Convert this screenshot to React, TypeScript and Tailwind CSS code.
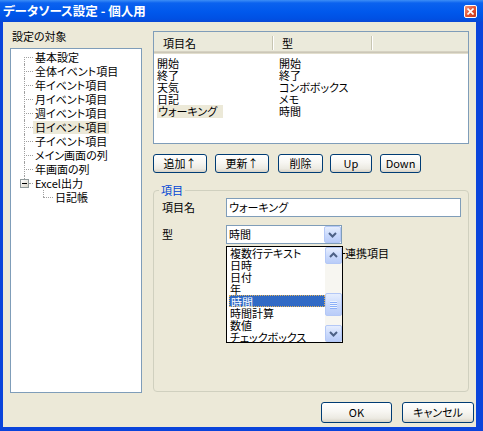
import React from "react";

const treeItems = [
  "基本設定",
  "全体イベント項目",
  "年イベント項目",
  "月イベント項目",
  "週イベント項目",
  "日イベント項目",
  "子イベント項目",
  "メイン画面の列",
  "年画面の列",
];

const fields = [
  { name: "開始", type: "開始" },
  { name: "終了", type: "終了" },
  { name: "天気", type: "コンボボックス" },
  { name: "日記", type: "メモ" },
  { name: "ウォーキング", type: "時間" },
];

const typeOptions = [
  "複数行テキスト",
  "日時",
  "日付",
  "年",
  "時間",
  "時間計算",
  "数値",
  "チェックボックス",
];

const xpButton =
  "flex items-center justify-center rounded-[3px] border border-[#003C74] bg-[linear-gradient(to_bottom,#FFFFFF_0%,#F7F6F2_45%,#ECEAE2_80%,#D8D2C6_100%)] text-[11px] leading-none text-black";

const scrollButton =
  "flex h-[17px] w-[17px] items-center justify-center rounded-[2px] border border-[#B4C8F6] bg-[linear-gradient(to_bottom,#E6EEFE_0%,#C9D9FC_55%,#B9CCF8_100%)]";

function Chevron({ up }: { up?: boolean }) {
  return (
    <svg width="9" height="6" viewBox="0 0 9 6" aria-hidden="true">
      <path
        d={up ? "M1 5 L4.5 1.5 L8 5" : "M1 1 L4.5 4.5 L8 1"}
        fill="none"
        stroke="#4D6185"
        strokeWidth="2"
      />
    </svg>
  );
}

function TreePanel() {
  return (
    <div className="mt-[6px] h-[345px] w-[132px] border border-[#7F9DB9] bg-white pt-[1px]">
      {treeItems.map((item, i) => (
        <div key={item} className="flex h-[14px] items-center">
          <div className="relative ml-[13px] h-full w-[9px]">
            <span
              className={`absolute left-0 bottom-0 border-l border-dotted border-[#A0A0A0] ${
                i === 0 ? "top-[7px]" : "top-0"
              }`}
            />
            <span className="absolute left-0 top-[7px] w-[9px] border-t border-dotted border-[#A0A0A0]" />
          </div>
          <span
            className={`h-[13px] px-[2px] text-[11px] leading-[13px] ${
              i === 5 ? "bg-[#ECE9D8]" : ""
            }`}
          >
            {item}
          </span>
        </div>
      ))}
      <div className="flex h-[14px] items-center">
        <div className="relative ml-[9px] h-full w-[13px]">
          <span className="absolute left-[4px] top-0 h-[3px] border-l border-dotted border-[#A0A0A0]" />
          <span className="absolute left-[9px] top-[7px] w-[4px] border-t border-dotted border-[#A0A0A0]" />
          <span className="absolute left-0 top-[3px] flex h-[9px] w-[9px] items-center justify-center border border-[#919B9C] bg-[linear-gradient(to_bottom_right,#FFFFFF,#D8D4C8)]">
            <span className="h-px w-[5px] bg-black" />
          </span>
        </div>
        <span className="h-[13px] px-[2px] text-[11px] leading-[13px]">Excel出力</span>
      </div>
      <div className="flex h-[14px] items-center">
        <div className="relative ml-[32px] h-full w-[10px]">
          <span className="absolute left-0 top-0 h-[7px] border-l border-dotted border-[#A0A0A0]" />
          <span className="absolute left-0 top-[7px] w-[10px] border-t border-dotted border-[#A0A0A0]" />
        </div>
        <span className="h-[13px] px-[2px] text-[11px] leading-[13px]">日記帳</span>
      </div>
    </div>
  );
}

function ListView() {
  return (
    <div className="h-[113px] border border-[#7F9DB9] bg-white">
      <div className="flex h-[22px] items-center bg-[#EBEADB] shadow-[inset_0_-1px_0_#E2DECD,inset_0_-2px_0_#CBC7B8,inset_0_-3px_0_#D6D2C2]">
        <span className="w-[118px] pl-[9px] text-[11px] leading-none">項目名</span>
        <span className="h-[14px] w-[2px] border-l border-[#C7C5B2] bg-white" />
        <span className="w-[97px] pl-[8px] text-[11px] leading-none">型</span>
        <span className="h-[14px] w-[2px] border-l border-[#C7C5B2] bg-white" />
      </div>
      <div className="pt-[3px]">
        {fields.map((f, i) => (
          <div key={f.name} className="flex h-[12px] items-center text-[11px] leading-[12px]">
            <div className="w-[125px] pl-[3px]">
              <span className={i === 4 ? "inline-block h-[13px] bg-[#ECE9D8] pl-px pr-[6px] leading-[13px]" : ""}>
                {f.name}
              </span>
            </div>
            <span>{f.type}</span>
          </div>
        ))}
      </div>
    </div>
  );
}

function TypeDropdown() {
  return (
    <div className="absolute left-[-1px] top-[20px] z-10 flex h-[97px] w-[117px] border border-black bg-white">
      <div className="w-[99px] pl-[2px]">
        {typeOptions.map((opt, i) => (
          <div
            key={opt}
            className={`h-[12px] pl-px text-[11px] leading-[12px] ${
              i === 4 ? "border border-dotted border-[#E3B35A] bg-[#316AC5] pl-0 leading-[10px] text-white" : ""
            }`}
          >
            {opt}
          </div>
        ))}
      </div>
      <div className="flex w-[17px] flex-col bg-[#F7F6F1]">
        <div className={scrollButton}>
          <Chevron up />
        </div>
        <div className="h-[29px]" />
        <div className={`${scrollButton} h-[24px] flex-col gap-px`}>
          <span className="h-px w-[7px] bg-[#EEF4FE] shadow-[0_1px_0_#8CB0F8]" />
          <span className="h-px w-[7px] bg-[#EEF4FE] shadow-[0_1px_0_#8CB0F8]" />
          <span className="h-px w-[7px] bg-[#EEF4FE] shadow-[0_1px_0_#8CB0F8]" />
          <span className="h-px w-[7px] bg-[#EEF4FE] shadow-[0_1px_0_#8CB0F8]" />
        </div>
        <div className="h-[9px]" />
        <div className={scrollButton}>
          <Chevron />
        </div>
      </div>
    </div>
  );
}

function ItemGroup() {
  return (
    <div className="relative mt-[17px] h-[202px] rounded-[4px] border border-[#D0D0BF]">
      <span className="absolute left-[5px] top-[-7px] bg-[#ECE9D8] px-[2px] text-[11px] leading-[13px] text-[#0046D5]">
        項目
      </span>
      <div className="flex items-center pl-[8px] pt-[7px]">
        <span className="w-[64px] text-[11px] leading-none">項目名</span>
        <div className="flex h-[19px] w-[235px] items-center border border-[#7F9DB9] bg-white pl-[2px] text-[11px] leading-none">
          ウォーキング
        </div>
      </div>
      <div className="flex items-center pl-[8px] pt-[8px]">
        <span className="w-[64px] text-[11px] leading-none">型</span>
        <div className="relative flex h-[19px] w-[116px] items-center justify-between border border-[#7F9DB9] bg-white pl-[2px] text-[11px] leading-none">
          <span>時間</span>
          <div className={scrollButton}>
            <Chevron />
          </div>
          <TypeDropdown />
        </div>
      </div>
      <div className="flex items-center pl-[188px] pt-[3px]">
        <span className="h-px w-[3px] bg-black" />
        <span className="text-[11px] leading-[12px]">連携項目</span>
      </div>
    </div>
  );
}

export default function App() {
  return (
    <div className="flex h-[431px] w-[483px] flex-col overflow-hidden bg-[#0A44DB] font-['Noto_Sans_CJK_JP','MS_UI_Gothic',sans-serif] text-black [font-feature-settings:'palt']">
      <div className="flex h-[22px] shrink-0 items-center justify-between bg-[linear-gradient(to_bottom,#3D8EF6_0px,#0B62EF_3px,#0058EC_12px,#0050E3_19px,#0A47D4_22px)] pl-[3px] pr-[6px]">
        <span className="text-[12.5px] font-bold leading-none text-white">データソース設定 - 個人用</span>
        <span className="flex h-[13px] w-[13px] items-center justify-center rounded-[2px] border border-white bg-[linear-gradient(to_bottom_right,#F2957C,#E2502F_55%,#C23A1F)]">
          <svg width="7" height="7" viewBox="0 0 7 7" aria-hidden="true">
            <path d="M0.5 0.5 L6.5 6.5 M6.5 0.5 L0.5 6.5" stroke="#FFFFFF" strokeWidth="1.6" />
          </svg>
        </span>
      </div>
      <div className="flex flex-1 pb-[4px] pl-[3px] pr-[7px]">
        <div className="flex flex-1 flex-col bg-[#ECE9D8]">
          <div className="flex pl-[7px]">
            <div className="w-[132px] pt-[8px]">
              <div className="ml-[2px] text-[11px] leading-[12px]">設定の対象</div>
              <TreePanel />
            </div>
            <div className="ml-[11px] w-[316px] pt-[9px]">
              <ListView />
              <div className="mt-[10px] flex">
                <button type="button" className={`${xpButton} h-[19px] w-[54px]`}>追加↑</button>
                <button type="button" className={`${xpButton} ml-[8px] h-[19px] w-[54px]`}>更新↑</button>
                <button type="button" className={`${xpButton} ml-[9px] h-[19px] w-[45px]`}>削除</button>
                <button type="button" className={`${xpButton} ml-[7px] h-[19px] w-[42px]`}>Up</button>
                <button type="button" className={`${xpButton} ml-[8px] h-[19px] w-[41px]`}>Down</button>
              </div>
              <ItemGroup />
            </div>
          </div>
          <div className="mt-[9px] flex justify-end gap-[10px] pr-[2px]">
            <button type="button" className={`${xpButton} h-[21px] w-[71px]`}>OK</button>
            <button type="button" className={`${xpButton} h-[21px] w-[72px]`}>キャンセル</button>
          </div>
        </div>
      </div>
    </div>
  );
}
